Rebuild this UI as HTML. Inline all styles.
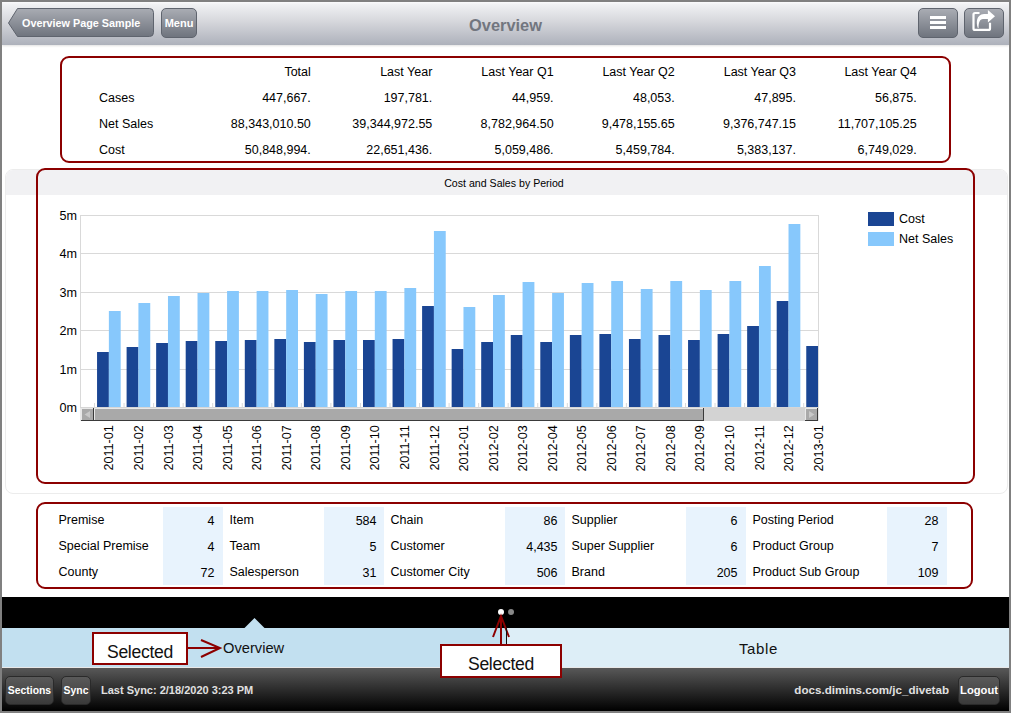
<!DOCTYPE html>
<html><head><meta charset="utf-8">
<style>
*{margin:0;padding:0;box-sizing:border-box}
html,body{width:1011px;height:713px;overflow:hidden;background:#808080;font-family:"Liberation Sans",sans-serif}
#page{position:absolute;left:2px;top:2px;width:1007px;height:709px;background:#fff;overflow:hidden}
.abs{position:absolute}
#hdr{position:absolute;left:0;top:0;width:1007px;height:43px;background:linear-gradient(#fbfbfc 0,#f0f1f3 6%,#d6d7dc 45%,#adb1bb 100%);box-shadow:0 1px 2px rgba(0,0,0,0.12)}
.hbtn{position:absolute;top:6px;height:30px;border:1px solid #5f646e;border-radius:5px;background:linear-gradient(#a9acb3,#6f747e);color:#fff;font-weight:bold;font-size:11px;line-height:28px;text-align:center}
#title{position:absolute;left:0;width:1007px;top:13.5px;text-align:center;font-weight:bold;font-size:16.4px;color:#72767f}
.tc{position:absolute;font-size:12.5px;line-height:14px;color:#000;white-space:nowrap}
.bc{position:absolute;font-size:12.5px;line-height:14px;color:#000;white-space:nowrap}
.vcol{position:absolute;top:507px;width:60px;height:78px;background:#e8f3fd}
.redbox{position:absolute;border:2px solid #8c0000;border-radius:9px}
svg text{font-family:"Liberation Sans",sans-serif}
.yl{font-size:12.6px;fill:#000}
.xl{font-size:12.6px;fill:#000}
.lg{font-size:12.5px;fill:#000}
.ttl{font-size:10.6px;fill:#000}
</style></head><body>
<div id="page">
 <div id="hdr">
  <svg class="abs" style="left:0;top:0" width="160" height="43">
   <defs><linearGradient id="bg1" x1="0" y1="0" x2="0" y2="1"><stop offset="0" stop-color="#a9acb3"/><stop offset="1" stop-color="#6f747e"/></linearGradient></defs>
   <path d="M6.5 21 L15.5 6.5 L147.5 6.5 Q151.5 6.5 151.5 10.5 L151.5 30.5 Q151.5 34.5 147.5 34.5 L15.5 34.5 Z" fill="url(#bg1)" stroke="#5f646e" stroke-width="1"/>
  </svg>
  <div class="abs" style="left:20px;top:15px;font-weight:bold;font-size:10.8px;color:#fff">Overview Page Sample</div>
  <div class="hbtn" style="left:159px;width:36px">Menu</div>
  <div id="title">Overview</div>
  <div class="hbtn" style="left:916px;width:40px"></div>
  <div class="abs" style="left:928px;top:14px;width:16px;height:3px;background:#fff"></div>
  <div class="abs" style="left:928px;top:19px;width:16px;height:3px;background:#fff"></div>
  <div class="abs" style="left:928px;top:24px;width:16px;height:3px;background:#fff"></div>
  <div class="hbtn" style="left:962px;width:40px"></div>
  <svg class="abs" style="left:962px;top:6px" width="40" height="30">
   <path d="M15.5 5 L11 5 Q9.5 5 9.5 6.5 L9.5 20.4 Q9.5 21.9 11 21.9 L24.5 21.9 Q26 21.9 26 20.4 L26 14.8" fill="none" stroke="#fff" stroke-width="2.2"/>
   <path d="M13.8 20 C12 15 12 6.5 20 6 L23.9 6 L23.9 2 L31 8.3 L23.9 14.4 L23.9 11 L19 11 C15.5 11.2 14.5 15 14.6 20 Z" fill="#fff"/>
  </svg>
 </div>
</div>
<div class="abs" style="left:0;top:0;width:1011px;height:713px">
 <div class="redbox" style="left:60px;top:56px;width:891px;height:107px"></div>
 <div class="tc" style="right:700.2px;top:65px">Total</div>
<div class="tc" style="right:578.7px;top:65px">Last Year</div>
<div class="tc" style="right:457.4px;top:65px">Last Year Q1</div>
<div class="tc" style="right:336.3px;top:65px">Last Year Q2</div>
<div class="tc" style="right:215.0px;top:65px">Last Year Q3</div>
<div class="tc" style="right:94.3px;top:65px">Last Year Q4</div>
<div class="tc" style="left:99px;top:90.7px">Cases</div>
<div class="tc" style="right:700.2px;top:90.7px">447,667.</div>
<div class="tc" style="right:578.7px;top:90.7px">197,781.</div>
<div class="tc" style="right:457.4px;top:90.7px">44,959.</div>
<div class="tc" style="right:336.3px;top:90.7px">48,053.</div>
<div class="tc" style="right:215.0px;top:90.7px">47,895.</div>
<div class="tc" style="right:94.3px;top:90.7px">56,875.</div>
<div class="tc" style="left:99px;top:116.7px">Net Sales</div>
<div class="tc" style="right:700.2px;top:116.7px">88,343,010.50</div>
<div class="tc" style="right:578.7px;top:116.7px">39,344,972.55</div>
<div class="tc" style="right:457.4px;top:116.7px">8,782,964.50</div>
<div class="tc" style="right:336.3px;top:116.7px">9,478,155.65</div>
<div class="tc" style="right:215.0px;top:116.7px">9,376,747.15</div>
<div class="tc" style="right:94.3px;top:116.7px">11,707,105.25</div>
<div class="tc" style="left:99px;top:142.7px">Cost</div>
<div class="tc" style="right:700.2px;top:142.7px">50,848,994.</div>
<div class="tc" style="right:578.7px;top:142.7px">22,651,436.</div>
<div class="tc" style="right:457.4px;top:142.7px">5,059,486.</div>
<div class="tc" style="right:336.3px;top:142.7px">5,459,784.</div>
<div class="tc" style="right:215.0px;top:142.7px">5,383,137.</div>
<div class="tc" style="right:94.3px;top:142.7px">6,749,029.</div>
 <div class="abs" style="left:5px;top:169px;width:1003px;height:325px;border:1px solid #ececec;border-radius:8px;background:#fff;overflow:hidden">
   <div class="abs" style="left:0;top:0;width:1003px;height:25px;background:#f1f1f3"></div>
 </div>
 <div class="redbox" style="left:36px;top:168px;width:939px;height:316px"></div>
 <svg class="abs" style="left:0;top:0" width="1011" height="713">
 <line x1="80" y1="215.5" x2="819" y2="215.5" stroke="#d9d9d9" stroke-width="1"/>
<line x1="80" y1="253.5" x2="819" y2="253.5" stroke="#d9d9d9" stroke-width="1"/>
<line x1="80" y1="292.5" x2="819" y2="292.5" stroke="#d9d9d9" stroke-width="1"/>
<line x1="80" y1="330.5" x2="819" y2="330.5" stroke="#d9d9d9" stroke-width="1"/>
<line x1="80" y1="369.5" x2="819" y2="369.5" stroke="#d9d9d9" stroke-width="1"/>
<line x1="80" y1="407.5" x2="819" y2="407.5" stroke="#d9d9d9" stroke-width="1"/>
<text x="77" y="219.5" text-anchor="end" class="yl">5m</text>
<text x="77" y="258.0" text-anchor="end" class="yl">4m</text>
<text x="77" y="296.5" text-anchor="end" class="yl">3m</text>
<text x="77" y="335.0" text-anchor="end" class="yl">2m</text>
<text x="77" y="373.5" text-anchor="end" class="yl">1m</text>
<text x="77" y="412.0" text-anchor="end" class="yl">0m</text>
<line x1="80.5" y1="215" x2="80.5" y2="408" stroke="#d9d9d9"/>
<line x1="818.5" y1="215" x2="818.5" y2="408" stroke="#d9d9d9"/>
<clipPath id="pc"><rect x="81" y="200" width="737" height="208"/></clipPath>
<line x1="94.50" y1="403" x2="94.50" y2="407" stroke="#d9d9d9"/>
<line x1="124.05" y1="403" x2="124.05" y2="407" stroke="#d9d9d9"/>
<line x1="153.60" y1="403" x2="153.60" y2="407" stroke="#d9d9d9"/>
<line x1="183.15" y1="403" x2="183.15" y2="407" stroke="#d9d9d9"/>
<line x1="212.70" y1="403" x2="212.70" y2="407" stroke="#d9d9d9"/>
<line x1="242.25" y1="403" x2="242.25" y2="407" stroke="#d9d9d9"/>
<line x1="271.80" y1="403" x2="271.80" y2="407" stroke="#d9d9d9"/>
<line x1="301.35" y1="403" x2="301.35" y2="407" stroke="#d9d9d9"/>
<line x1="330.90" y1="403" x2="330.90" y2="407" stroke="#d9d9d9"/>
<line x1="360.45" y1="403" x2="360.45" y2="407" stroke="#d9d9d9"/>
<line x1="390.00" y1="403" x2="390.00" y2="407" stroke="#d9d9d9"/>
<line x1="419.55" y1="403" x2="419.55" y2="407" stroke="#d9d9d9"/>
<line x1="449.10" y1="403" x2="449.10" y2="407" stroke="#d9d9d9"/>
<line x1="478.65" y1="403" x2="478.65" y2="407" stroke="#d9d9d9"/>
<line x1="508.20" y1="403" x2="508.20" y2="407" stroke="#d9d9d9"/>
<line x1="537.75" y1="403" x2="537.75" y2="407" stroke="#d9d9d9"/>
<line x1="567.30" y1="403" x2="567.30" y2="407" stroke="#d9d9d9"/>
<line x1="596.85" y1="403" x2="596.85" y2="407" stroke="#d9d9d9"/>
<line x1="626.40" y1="403" x2="626.40" y2="407" stroke="#d9d9d9"/>
<line x1="655.95" y1="403" x2="655.95" y2="407" stroke="#d9d9d9"/>
<line x1="685.50" y1="403" x2="685.50" y2="407" stroke="#d9d9d9"/>
<line x1="715.05" y1="403" x2="715.05" y2="407" stroke="#d9d9d9"/>
<line x1="744.60" y1="403" x2="744.60" y2="407" stroke="#d9d9d9"/>
<line x1="774.15" y1="403" x2="774.15" y2="407" stroke="#d9d9d9"/>
<line x1="803.70" y1="403" x2="803.70" y2="407" stroke="#d9d9d9"/>
<g clip-path="url(#pc)"><rect x="97.05" y="352.0" width="11.82" height="55.0" fill="#1a4593"/><rect x="108.87" y="311.0" width="11.82" height="96.0" fill="#87c8fc"/><rect x="126.60" y="347.0" width="11.82" height="60.0" fill="#1a4593"/><rect x="138.42" y="303.0" width="11.82" height="104.0" fill="#87c8fc"/><rect x="156.15" y="343.0" width="11.82" height="64.0" fill="#1a4593"/><rect x="167.97" y="296.0" width="11.82" height="111.0" fill="#87c8fc"/><rect x="185.70" y="341.0" width="11.82" height="66.0" fill="#1a4593"/><rect x="197.52" y="293.0" width="11.82" height="114.0" fill="#87c8fc"/><rect x="215.25" y="341.0" width="11.82" height="66.0" fill="#1a4593"/><rect x="227.07" y="291.0" width="11.82" height="116.0" fill="#87c8fc"/><rect x="244.80" y="340.0" width="11.82" height="67.0" fill="#1a4593"/><rect x="256.62" y="291.0" width="11.82" height="116.0" fill="#87c8fc"/><rect x="274.35" y="339.0" width="11.82" height="68.0" fill="#1a4593"/><rect x="286.17" y="290.0" width="11.82" height="117.0" fill="#87c8fc"/><rect x="303.90" y="342.0" width="11.82" height="65.0" fill="#1a4593"/><rect x="315.72" y="294.0" width="11.82" height="113.0" fill="#87c8fc"/><rect x="333.45" y="340.0" width="11.82" height="67.0" fill="#1a4593"/><rect x="345.27" y="291.0" width="11.82" height="116.0" fill="#87c8fc"/><rect x="363.00" y="340.0" width="11.82" height="67.0" fill="#1a4593"/><rect x="374.82" y="291.0" width="11.82" height="116.0" fill="#87c8fc"/><rect x="392.55" y="339.0" width="11.82" height="68.0" fill="#1a4593"/><rect x="404.37" y="288.0" width="11.82" height="119.0" fill="#87c8fc"/><rect x="422.10" y="306.0" width="11.82" height="101.0" fill="#1a4593"/><rect x="433.92" y="231.0" width="11.82" height="176.0" fill="#87c8fc"/><rect x="451.65" y="349.0" width="11.82" height="58.0" fill="#1a4593"/><rect x="463.47" y="307.0" width="11.82" height="100.0" fill="#87c8fc"/><rect x="481.20" y="342.0" width="11.82" height="65.0" fill="#1a4593"/><rect x="493.02" y="295.0" width="11.82" height="112.0" fill="#87c8fc"/><rect x="510.75" y="335.0" width="11.82" height="72.0" fill="#1a4593"/><rect x="522.57" y="282.0" width="11.82" height="125.0" fill="#87c8fc"/><rect x="540.30" y="342.0" width="11.82" height="65.0" fill="#1a4593"/><rect x="552.12" y="293.0" width="11.82" height="114.0" fill="#87c8fc"/><rect x="569.85" y="335.0" width="11.82" height="72.0" fill="#1a4593"/><rect x="581.67" y="283.0" width="11.82" height="124.0" fill="#87c8fc"/><rect x="599.40" y="334.0" width="11.82" height="73.0" fill="#1a4593"/><rect x="611.22" y="281.0" width="11.82" height="126.0" fill="#87c8fc"/><rect x="628.95" y="339.0" width="11.82" height="68.0" fill="#1a4593"/><rect x="640.77" y="289.0" width="11.82" height="118.0" fill="#87c8fc"/><rect x="658.50" y="335.0" width="11.82" height="72.0" fill="#1a4593"/><rect x="670.32" y="281.0" width="11.82" height="126.0" fill="#87c8fc"/><rect x="688.05" y="340.0" width="11.82" height="67.0" fill="#1a4593"/><rect x="699.87" y="290.0" width="11.82" height="117.0" fill="#87c8fc"/><rect x="717.60" y="334.0" width="11.82" height="73.0" fill="#1a4593"/><rect x="729.42" y="281.0" width="11.82" height="126.0" fill="#87c8fc"/><rect x="747.15" y="326.0" width="11.82" height="81.0" fill="#1a4593"/><rect x="758.97" y="266.0" width="11.82" height="141.0" fill="#87c8fc"/><rect x="776.70" y="301.0" width="11.82" height="106.0" fill="#1a4593"/><rect x="788.52" y="224.0" width="11.82" height="183.0" fill="#87c8fc"/><rect x="806.25" y="346.0" width="11.82" height="61.0" fill="#1a4593"/></g>
<text transform="translate(113.47,425.3) rotate(-90)" text-anchor="end" class="xl">2011-01</text>
<text transform="translate(143.02,425.3) rotate(-90)" text-anchor="end" class="xl">2011-02</text>
<text transform="translate(172.57,425.3) rotate(-90)" text-anchor="end" class="xl">2011-03</text>
<text transform="translate(202.12,425.3) rotate(-90)" text-anchor="end" class="xl">2011-04</text>
<text transform="translate(231.67,425.3) rotate(-90)" text-anchor="end" class="xl">2011-05</text>
<text transform="translate(261.22,425.3) rotate(-90)" text-anchor="end" class="xl">2011-06</text>
<text transform="translate(290.77,425.3) rotate(-90)" text-anchor="end" class="xl">2011-07</text>
<text transform="translate(320.32,425.3) rotate(-90)" text-anchor="end" class="xl">2011-08</text>
<text transform="translate(349.87,425.3) rotate(-90)" text-anchor="end" class="xl">2011-09</text>
<text transform="translate(379.42,425.3) rotate(-90)" text-anchor="end" class="xl">2011-10</text>
<text transform="translate(408.97,425.3) rotate(-90)" text-anchor="end" class="xl">2011-11</text>
<text transform="translate(438.52,425.3) rotate(-90)" text-anchor="end" class="xl">2011-12</text>
<text transform="translate(468.07,425.3) rotate(-90)" text-anchor="end" class="xl">2012-01</text>
<text transform="translate(497.62,425.3) rotate(-90)" text-anchor="end" class="xl">2012-02</text>
<text transform="translate(527.17,425.3) rotate(-90)" text-anchor="end" class="xl">2012-03</text>
<text transform="translate(556.72,425.3) rotate(-90)" text-anchor="end" class="xl">2012-04</text>
<text transform="translate(586.27,425.3) rotate(-90)" text-anchor="end" class="xl">2012-05</text>
<text transform="translate(615.82,425.3) rotate(-90)" text-anchor="end" class="xl">2012-06</text>
<text transform="translate(645.37,425.3) rotate(-90)" text-anchor="end" class="xl">2012-07</text>
<text transform="translate(674.92,425.3) rotate(-90)" text-anchor="end" class="xl">2012-08</text>
<text transform="translate(704.47,425.3) rotate(-90)" text-anchor="end" class="xl">2012-09</text>
<text transform="translate(734.02,425.3) rotate(-90)" text-anchor="end" class="xl">2012-10</text>
<text transform="translate(763.57,425.3) rotate(-90)" text-anchor="end" class="xl">2012-11</text>
<text transform="translate(793.12,425.3) rotate(-90)" text-anchor="end" class="xl">2012-12</text>
<text transform="translate(822.67,425.3) rotate(-90)" text-anchor="end" class="xl">2013-01</text>
<rect x="80.5" y="407.5" width="738" height="13.5" fill="#d3d3d3"/>
<rect x="81" y="408" width="13" height="13" fill="#a9a9a9"/><line x1="81" y1="408.5" x2="94" y2="408.5" stroke="#e8e8e8"/><line x1="81.5" y1="408" x2="81.5" y2="421" stroke="#e8e8e8"/><line x1="81" y1="420.5" x2="94" y2="420.5" stroke="#3a3a3a"/><line x1="93.5" y1="408" x2="93.5" y2="421" stroke="#3a3a3a"/>
<path d="M84.5 414.5 L90 411 L90 418 Z" fill="#c8c8c8"/>
<rect x="94" y="408" width="610" height="13" fill="#a9a9a9"/><line x1="94" y1="408.5" x2="704" y2="408.5" stroke="#e8e8e8"/><line x1="94.5" y1="408" x2="94.5" y2="421" stroke="#e8e8e8"/><line x1="94" y1="420.5" x2="704" y2="420.5" stroke="#3a3a3a"/><line x1="703.5" y1="408" x2="703.5" y2="421" stroke="#3a3a3a"/>
<rect x="805" y="408" width="13" height="13" fill="#a9a9a9"/><line x1="805" y1="408.5" x2="818" y2="408.5" stroke="#e8e8e8"/><line x1="805.5" y1="408" x2="805.5" y2="421" stroke="#e8e8e8"/><line x1="805" y1="420.5" x2="818" y2="420.5" stroke="#3a3a3a"/><line x1="817.5" y1="408" x2="817.5" y2="421" stroke="#3a3a3a"/>
<path d="M814.5 414.5 L809 411 L809 418 Z" fill="#c8c8c8"/>
<rect x="868" y="212" width="26" height="14" fill="#1a4593"/>
<rect x="868" y="232" width="26" height="14" fill="#87c8fc"/>
<text x="899" y="223" class="lg">Cost</text>
<text x="899" y="243" class="lg">Net Sales</text>
<text x="504" y="186.5" text-anchor="middle" class="ttl">Cost and Sales by Period</text>
 </svg>
 <div class="redbox" style="left:36px;top:502px;width:937px;height:87px"></div>
 <div class="vcol" style="left:163px"></div>
<div class="bc" style="left:58.5px;top:512.7px">Premise</div>
<div class="bc" style="right:796.5px;top:513.7px">4</div>
<div class="bc" style="left:58.5px;top:538.7px">Special Premise</div>
<div class="bc" style="right:796.5px;top:539.7px">4</div>
<div class="bc" style="left:58.5px;top:564.7px">County</div>
<div class="bc" style="right:796.5px;top:565.7px">72</div>
<div class="vcol" style="left:324px"></div>
<div class="bc" style="left:229.5px;top:512.7px">Item</div>
<div class="bc" style="right:634.5px;top:513.7px">584</div>
<div class="bc" style="left:229.5px;top:538.7px">Team</div>
<div class="bc" style="right:634.5px;top:539.7px">5</div>
<div class="bc" style="left:229.5px;top:564.7px">Salesperson</div>
<div class="bc" style="right:634.5px;top:565.7px">31</div>
<div class="vcol" style="left:505px"></div>
<div class="bc" style="left:390.5px;top:512.7px">Chain</div>
<div class="bc" style="right:453.5px;top:513.7px">86</div>
<div class="bc" style="left:390.5px;top:538.7px">Customer</div>
<div class="bc" style="right:453.5px;top:539.7px">4,435</div>
<div class="bc" style="left:390.5px;top:564.7px">Customer City</div>
<div class="bc" style="right:453.5px;top:565.7px">506</div>
<div class="vcol" style="left:686px"></div>
<div class="bc" style="left:571.5px;top:512.7px">Supplier</div>
<div class="bc" style="right:273.5px;top:513.7px">6</div>
<div class="bc" style="left:571.5px;top:538.7px">Super Supplier</div>
<div class="bc" style="right:273.5px;top:539.7px">6</div>
<div class="bc" style="left:571.5px;top:564.7px">Brand</div>
<div class="bc" style="right:273.5px;top:565.7px">205</div>
<div class="vcol" style="left:887px"></div>
<div class="bc" style="left:752.5px;top:512.7px">Posting Period</div>
<div class="bc" style="right:72.5px;top:513.7px">28</div>
<div class="bc" style="left:752.5px;top:538.7px">Product Group</div>
<div class="bc" style="right:72.5px;top:539.7px">7</div>
<div class="bc" style="left:752.5px;top:564.7px">Product Sub Group</div>
<div class="bc" style="right:72.5px;top:565.7px">109</div>
 <div class="abs" style="left:2px;top:597px;width:1007px;height:31px;background:#000"></div>
 <div class="abs" style="left:2px;top:628px;width:504px;height:40px;background:#c2e0f0"></div>
 <div class="abs" style="left:506px;top:628px;width:503px;height:40px;background:#ddeef7"></div>
 <svg class="abs" style="left:244px;top:618px" width="21" height="11"><path d="M0 10.5 L10.5 0 L21 10.5 Z" fill="#c2e0f0"/></svg>
 <div class="abs" style="left:223px;top:640.3px;font-size:14.7px;color:#111">Overview</div>
 <div class="abs" style="left:739px;top:640px;font-size:15px;letter-spacing:0.6px;color:#111">Table</div>
 <div class="abs" style="left:498px;top:609px;width:6px;height:6px;border-radius:3px;background:#fff"></div>
 <div class="abs" style="left:508px;top:609px;width:6px;height:6px;border-radius:3px;background:#888"></div>
 <div class="abs" style="left:2px;top:667px;width:1007px;height:1px;background:#e8e8e8"></div>
 <div class="abs" style="left:2px;top:668px;width:1007px;height:43px;background:linear-gradient(#585858,#000)"></div>
 <div class="abs fbtn" style="left:5px;top:676px;width:49px;height:29px">Sections</div>
 <div class="abs fbtn" style="left:61px;top:676px;width:30px;height:29px">Sync</div>
 <div class="abs" style="left:101px;top:683.7px;font-size:11px;font-weight:bold;color:#e0e0e0">Last Sync: 2/18/2020 3:23 PM</div>
 <div class="abs" style="right:62px;top:683.2px;font-size:11.6px;font-weight:bold;color:#e0e0e0">docs.dimins.com/jc_divetab</div>
 <div class="abs fbtn" style="left:958px;top:675.5px;width:42px;height:29.5px;font-size:11.2px">Logout</div>
 <!-- annotations -->
 <div class="abs" style="left:92px;top:632px;width:96px;height:33px;border:2px solid #8c0000;background:#fff;font-size:17.6px;letter-spacing:-0.3px;color:#111;text-align:center;line-height:30px;padding-top:3px">Selected</div>
 <div class="abs" style="left:440px;top:644px;width:122px;height:34px;border:2px solid #8c0000;background:#fff;font-size:17.6px;letter-spacing:-0.3px;color:#111;text-align:center;line-height:30px;padding-top:3px">Selected</div>
 <svg class="abs" style="left:0;top:0" width="1011" height="713">
  <path d="M188 648 L219 648 M201 640 L220 648 L201 657" fill="none" stroke="#8c0000" stroke-width="2"/>
  <path d="M501 645 L501 616 M493 637 L501 616 L509 637" fill="none" stroke="#8c0000" stroke-width="2"/>
  <line x1="506.5" y1="628" x2="506.5" y2="644" stroke="#111" stroke-width="1"/>
 </svg>
</div>
<style>
.fbtn{border:1px solid #2a2a2a;border-radius:5px;background:linear-gradient(#5a5a5a,#3a3a3a);color:#fff;font-weight:bold;font-size:10.4px;text-align:center;line-height:27px}
</style>
</body></html>
